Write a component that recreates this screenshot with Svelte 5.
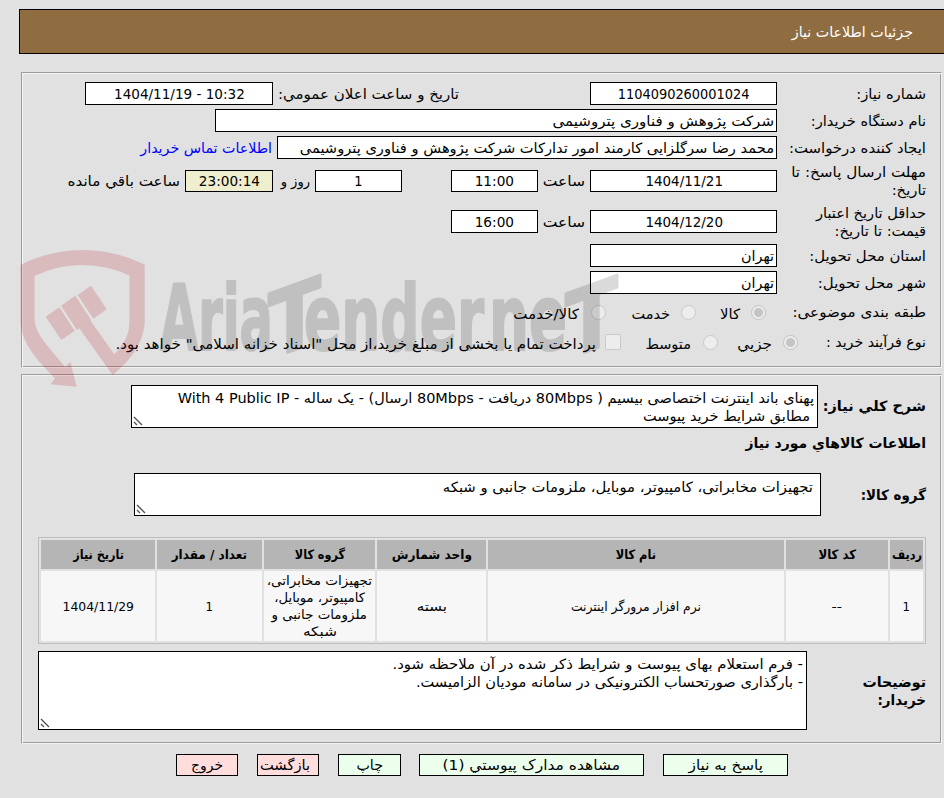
<script lang="ts">
  const goods = [
    { title: "ردیف", tw: 30, lines: [["1", 7]] },
    { title: "کد کالا", tw: 38, lines: [["--", 10]] },
    { title: "نام کالا", tw: 40, lines: [["نرم افزار مرورگر اینترنت", 130]] },
    { title: "واحد شمارش", tw: 80, lines: [["بسته", 31]] },
    {
      title: "گروه کالا",
      tw: 50,
      lines: [
        ["تجهیزات مخابراتی،", 105],
        ["کامپیوتر، موبایل،", 91],
        ["ملزومات جانبی و", 95],
        ["شبکه", 34],
      ],
    },
    { title: "تعداد / مقدار", tw: 75, lines: [["1", 7]] },
    { title: "تاریخ نیاز", tw: 51, lines: [["1404/11/29", 71]] },
  ];

  // squeezes a line of text horizontally to the given width
  function fit(node: HTMLElement, width: number) {
    const natural = node.offsetWidth;
    node.style.width = `${width}px`;
    node.style.transform = `scaleX(${width / natural})`;
  }
</script>

{#snippet grip()}
  <svg class="grip" width="10" height="10" viewBox="0 0 10 10">
    <path d="M1 1l8 8M1 6l3 3" />
  </svg>
{/snippet}

<div class="page" dir="rtl">
  <header class="title"><span class="t" use:fit={121}>جزئیات اطلاعات نیاز</span></header>

  <section class="panel info">
    <div class="row">
      <div class="label"><span class="t" use:fit={70}>شماره نیاز:</span></div>
      <div class="field num date"><span class="t" use:fit={132}>1104090260001024</span></div>
      <div class="announce"><span class="t" use:fit={181}>تاریخ و ساعت اعلان عمومي:</span></div>
      <div class="field num stamp"><span class="t" dir="ltr" use:fit={131}>1404/11/19 - 10:32</span></div>
    </div>
    <div class="row">
      <div class="label"><span class="t" use:fit={115}>نام دستگاه خریدار:</span></div>
      <div class="field org"><span class="t" use:fit={221}>شرکت پژوهش و فناوری پتروشیمی</span></div>
    </div>
    <div class="row">
      <div class="label"><span class="t" use:fit={137}>ایجاد کننده درخواست:</span></div>
      <div class="field creator"><span class="t" use:fit={474}>محمد رضا سرگلزایی کارمند امور تدارکات شرکت پژوهش و فناوری پتروشیمی</span></div>
      <a class="after" href="#contact"><span class="t" use:fit={132}>اطلاعات تماس خریدار</span></a>
    </div>
    <div class="row tall">
      <div class="label">
        <span class="t" use:fit={135}>مهلت ارسال پاسخ: تا</span>
        <span class="t" use:fit={34}>تاریخ:</span>
      </div>
      <div class="field num date low"><span class="t" use:fit={78}>1404/11/21</span></div>
      <div class="hour"><span class="t" use:fit={42}>ساعت</span></div>
      <div class="field num time low"><span class="t" use:fit={39}>11:00</span></div>
      <div class="field num time low days"><span class="t" use:fit={8}>1</span></div>
      <div class="and"><span class="t" use:fit={29}>روز و</span></div>
      <div class="field num left low"><span class="t" use:fit={61}>23:00:14</span></div>
      <div class="after"><span class="t" use:fit={112}>ساعت باقي مانده</span></div>
    </div>
    <div class="row tall2">
      <div class="label">
        <span class="t" use:fit={110}>حداقل تاریخ اعتبار</span>
        <span class="t" use:fit={91}>قیمت: تا تاریخ:</span>
      </div>
      <div class="field num date"><span class="t" use:fit={78}>1404/12/20</span></div>
      <div class="hour"><span class="t" use:fit={42}>ساعت</span></div>
      <div class="field num time"><span class="t" use:fit={39}>16:00</span></div>
    </div>
    <div class="row">
      <div class="label"><span class="t" use:fit={117}>استان محل تحویل:</span></div>
      <div class="field place"><span class="t" use:fit={33}>تهران</span></div>
    </div>
    <div class="row">
      <div class="label"><span class="t" use:fit={108}>شهر محل تحویل:</span></div>
      <div class="field place"><span class="t" use:fit={33}>تهران</span></div>
    </div>
    <div class="row options">
      <div class="label kind"><span class="t" use:fit={133}>طبقه بندی موضوعی:</span></div>
      <i class="radio on"></i>
      <div class="opt o1"><span class="t" use:fit={20}>کالا</span></div>
      <i class="radio"></i>
      <div class="opt o2"><span class="t" use:fit={39}>خدمت</span></div>
      <i class="radio"></i>
      <div class="opt o3"><span class="t" use:fit={66}>کالا/خدمت</span></div>
    </div>
    <div class="row process">
      <div class="label proc"><span class="t" use:fit={100}>نوع فرآیند خرید :</span></div>
      <i class="radio on"></i>
      <div class="opt p1"><span class="t" use:fit={35}>جزيي</span></div>
      <i class="radio"></i>
      <div class="opt p2"><span class="t" use:fit={46}>متوسط</span></div>
      <i class="check"></i>
      <div class="opt p3"><span class="t" use:fit={481}>پرداخت تمام یا بخشی از مبلغ خرید،از محل "اسناد خزانه اسلامی" خواهد بود.</span></div>
    </div>
  </section>

  <section class="panel need">
    <div class="block summary">
      <strong class="t" use:fit={103}>شرح کلي نیاز:</strong>
      <div class="area">
        <span class="t" use:fit={636}>پهنای باند اینترنت اختصاصی بیسیم ( 80Mbps دریافت - 80Mbps ارسال) - یک ساله - With 4 Public IP</span>
        <span class="t second" use:fit={167}>مطابق شرایط خرید پیوست</span>
        {@render grip()}
      </div>
    </div>
    <div class="heading"><strong class="t" use:fit={181}>اطلاعات کالاهاي مورد نیاز</strong></div>
    <div class="block group">
      <strong class="t" use:fit={65}>گروه کالا:</strong>
      <div class="area">
        <span class="t" use:fit={370}>تجهیزات مخابراتی، کامپیوتر، موبایل، ملزومات جانبی و شبکه</span>
        {@render grip()}
      </div>
    </div>

    <div class="goods">
      {#each goods as col}
        <div class="th"><strong class="t" use:fit={col.tw}>{col.title}</strong></div>
      {/each}
      {#each goods as col}
        <div class="td">
          {#each col.lines as [text, width]}
            <span class="t" use:fit={width as number}>{text}</span>
          {/each}
        </div>
      {/each}
    </div>

    <div class="block notes">
      <div class="side">
        <strong class="t" use:fit={63}>توضیحات</strong>
        <strong class="t" use:fit={49}>خریدار:</strong>
      </div>
      <div class="area">
        <span class="t" use:fit={410}>- فرم استعلام بهای پیوست و شرایط ذکر شده در آن ملاحظه شود.</span>
        <span class="t" use:fit={387}>- بارگذاری صورتحساب الکترونیکی در سامانه مودیان الزامیست.</span>
        {@render grip()}
      </div>
    </div>
  </section>

  <footer>
    <button class="reply"><span class="t" use:fit={75}>پاسخ به نیاز</span></button>
    <button class="docs"><span class="t" use:fit={177}>مشاهده مدارک پیوستي (1)</span></button>
    <button class="print"><span class="t" use:fit={26}>چاپ</span></button>
    <button class="red back"><span class="t" use:fit={50}>بازگشت</span></button>
    <button class="red"><span class="t" use:fit={32}>خروج</span></button>
  </footer>

  <svg class="mark" width="600" height="140" viewBox="20 249 600 140">
    <g class="shield">
      <path d="M20.500 265Q50 250 82.500 250Q115 250 144.700 264.500V320C144.700 342 130 361 112.700 375L79.300 328.300L77 330L61 305.700L75.300 295.700L91 320V321.500L114.300 354.300C124 344 129.500 336 129.500 320V275.500Q108 265 82 265Q57 265 34.500 276V318C34.500 334 49 347 65.300 367.300L70.300 361.700L76.700 386.700L50.700 384.300L55 378.300C38 361 20.500 343 20.500 320Z" />
      <path d="M45.700 316.700L59.300 307.300L74.700 330.700L61.300 340Z" />
      <path d="M77.700 295L91 285.700L106.700 309.300L93.300 318.700Z" />
    </g>
    <g class="word">
      <text x="160" y="350" textLength="113" lengthAdjust="spacingAndGlyphs">Aria</text>
      <text x="304" y="350" textLength="180" lengthAdjust="spacingAndGlyphs">ender</text>
      <text x="489" y="350" textLength="78" lengthAdjust="spacingAndGlyphs">ne</text>
      <text transform="translate(268 360) skewY(-20)" x="0" y="0" textLength="53" lengthAdjust="spacingAndGlyphs">T</text>
      <text transform="translate(565 360) skewY(-20)" x="0" y="0" textLength="53" lengthAdjust="spacingAndGlyphs">T</text>
    </g>
  </svg>
</div>

<style>
  :global(body) {
    background: #e1e1e1;
    overflow: hidden;
  }
  .page {
    position: relative;
    box-sizing: border-box;
    width: 944px;
    height: 798px;
    padding-top: 9px;
    overflow: hidden;
    font: 14px/18px "DejaVu Sans Condensed", "DejaVu Sans", sans-serif;
    font-stretch: condensed;
    color: #000;
  }
  .page * {
    box-sizing: border-box;
  }
  .t {
    display: block;
    flex: none;
    width: max-content;
    white-space: nowrap;
    text-align: right;
    transform-origin: right center;
  }
  .t[dir="ltr"] {
    text-align: left;
    transform-origin: left center;
  }
  .title {
    display: flex;
    align-items: center;
    height: 45px;
    margin-right: -1px;
    margin-left: 19px;
    padding-right: 31px;
    border: 1px solid #000;
    background: #8f6d40;
    color: #fff;
  }
  .panel {
    margin: 0 2px 0 21px;
    border: 1px solid;
    border-color: #9c9c9c #f4f4f4 #f4f4f4 #9c9c9c;
    box-shadow: inset 1px 1px #f4f4f4, inset -1px -1px #9c9c9c;
  }
  .info {
    height: 296px;
    margin-top: 18px;
    padding: 7px 15px 0 0;
  }
  .row {
    display: flex;
    align-items: center;
    height: 27px;
  }
  .tall {
    height: 40px;
  }
  .tall2 {
    height: 41px;
  }
  .label {
    flex: none;
    width: 149px;
  }
  .field {
    display: flex;
    flex: none;
    align-items: center;
    justify-content: center;
    height: 23px;
    border: 1px solid #000;
    background: #fff;
  }
  .num {
    font-size: 14.4px;
  }
  .low {
    height: 22px;
  }
  .date {
    width: 187px;
  }
  .announce {
    width: 186px;
    margin-right: 131px;
  }
  .stamp {
    width: 188px;
  }
  .org,
  .creator,
  .place {
    justify-content: flex-start;
    padding-right: 2px;
  }
  .org {
    width: 562px;
  }
  .creator {
    width: 500px;
  }
  .place {
    width: 187px;
  }
  .after {
    margin-right: 5px;
  }
  a {
    color: #0000ff;
    text-decoration: none;
  }
  .hour {
    width: 47px;
    margin-right: 5px;
  }
  .time {
    width: 87px;
  }
  .days {
    margin-right: 49px;
  }
  .and {
    width: 37px;
    margin-right: 5px;
  }
  .left {
    width: 88px;
    background: #efefcf;
  }
  .options {
    height: 32px;
  }
  .process {
    height: 28px;
  }
  .kind {
    width: 160px;
  }
  .proc {
    width: 128px;
  }
  .radio,
  .check {
    flex: none;
    width: 15px;
    height: 15px;
    border: 1px solid #c9c9c9;
    border-radius: 50%;
    background: #ededed;
  }
  .on {
    border-color: #c4c4c4;
    background: radial-gradient(circle, #c4c4c4 4px, #ededed 5px);
  }
  .check {
    width: 16px;
    height: 16px;
    border-radius: 2px;
  }
  .opt {
    padding-top: 4px;
  }
  .o1 {
    width: 55px;
    padding-right: 11px;
  }
  .o2 {
    width: 75px;
    padding-right: 11px;
  }
  .o3 {
    padding-right: 12px;
  }
  .p1 {
    width: 65px;
    padding-right: 11px;
  }
  .p2 {
    width: 82px;
    padding-right: 12px;
  }
  .p3 {
    padding-right: 9px;
  }
  .need {
    height: 370px;
    margin-top: 6px;
    padding: 10px 15px 0 16px;
  }
  .block {
    display: flex;
    align-items: center;
  }
  .summary > strong {
    padding-bottom: 2px;
  }
  .area {
    position: relative;
    width: 687px;
    height: 43px;
    padding: 3px;
    border: 1px solid #000;
    background: #fff;
  }
  .grip {
    position: absolute;
    bottom: 1px;
    left: 1px;
  }
  .grip path {
    fill: none;
    stroke: #555;
    stroke-width: 1.4;
  }
  .summary .area {
    margin-right: 5px;
  }
  .second {
    margin-right: 4px;
  }
  .heading {
    padding-top: 6px;
  }
  .group {
    margin-top: 21px;
  }
  .group .area {
    margin-right: 40px;
    padding: 4px 7px;
  }
  .goods {
    display: grid;
    grid-template-columns: 33px 102px 296px 109px 111px 105px 114px;
    grid-template-rows: 29px 70px;
    gap: 2px;
    width: 888px;
    height: 107px;
    margin-top: 21px;
    padding: 2px;
    border: 1px solid #bdbdbd;
    font-size: 13px;
    line-height: 17px;
  }
  .th,
  .td {
    display: flex;
    flex-direction: column;
    align-items: center;
    justify-content: center;
    background: #b5b5b5;
  }
  .td {
    background: #f7f7f7;
  }
  .notes {
    margin-top: 7px;
  }
  .side {
    width: 119px;
  }
  .notes .area {
    width: 769px;
    height: 79px;
  }
  footer {
    display: flex;
    gap: 19px;
    margin-top: 10px;
    padding-right: 156px;
  }
  button {
    display: flex;
    align-items: center;
    justify-content: center;
    width: 62px;
    height: 22px;
    padding: 0;
    border: 1px solid #000;
    background: #ecffec;
    color: #000;
    font: inherit;
  }
  .reply {
    width: 125px;
  }
  .docs {
    width: 225px;
  }
  .print {
    width: 63px;
    margin-right: -1px;
  }
  .red {
    background: #ffdddd;
  }
  .back {
    justify-content: flex-start;
    padding-right: 8px;
  }
  .mark {
    position: absolute;
    top: 249px;
    left: 20px;
    pointer-events: none;
  }
  .shield {
    fill: #b30015;
    opacity: 0.17;
  }
  .word {
    fill: #000;
    stroke: #000;
    stroke-width: 2px;
    stroke-linejoin: round;
    opacity: 0.14;
    direction: ltr;
    font: bold 91px "DejaVu Sans Condensed", "DejaVu Sans", sans-serif;
  }
</style>
